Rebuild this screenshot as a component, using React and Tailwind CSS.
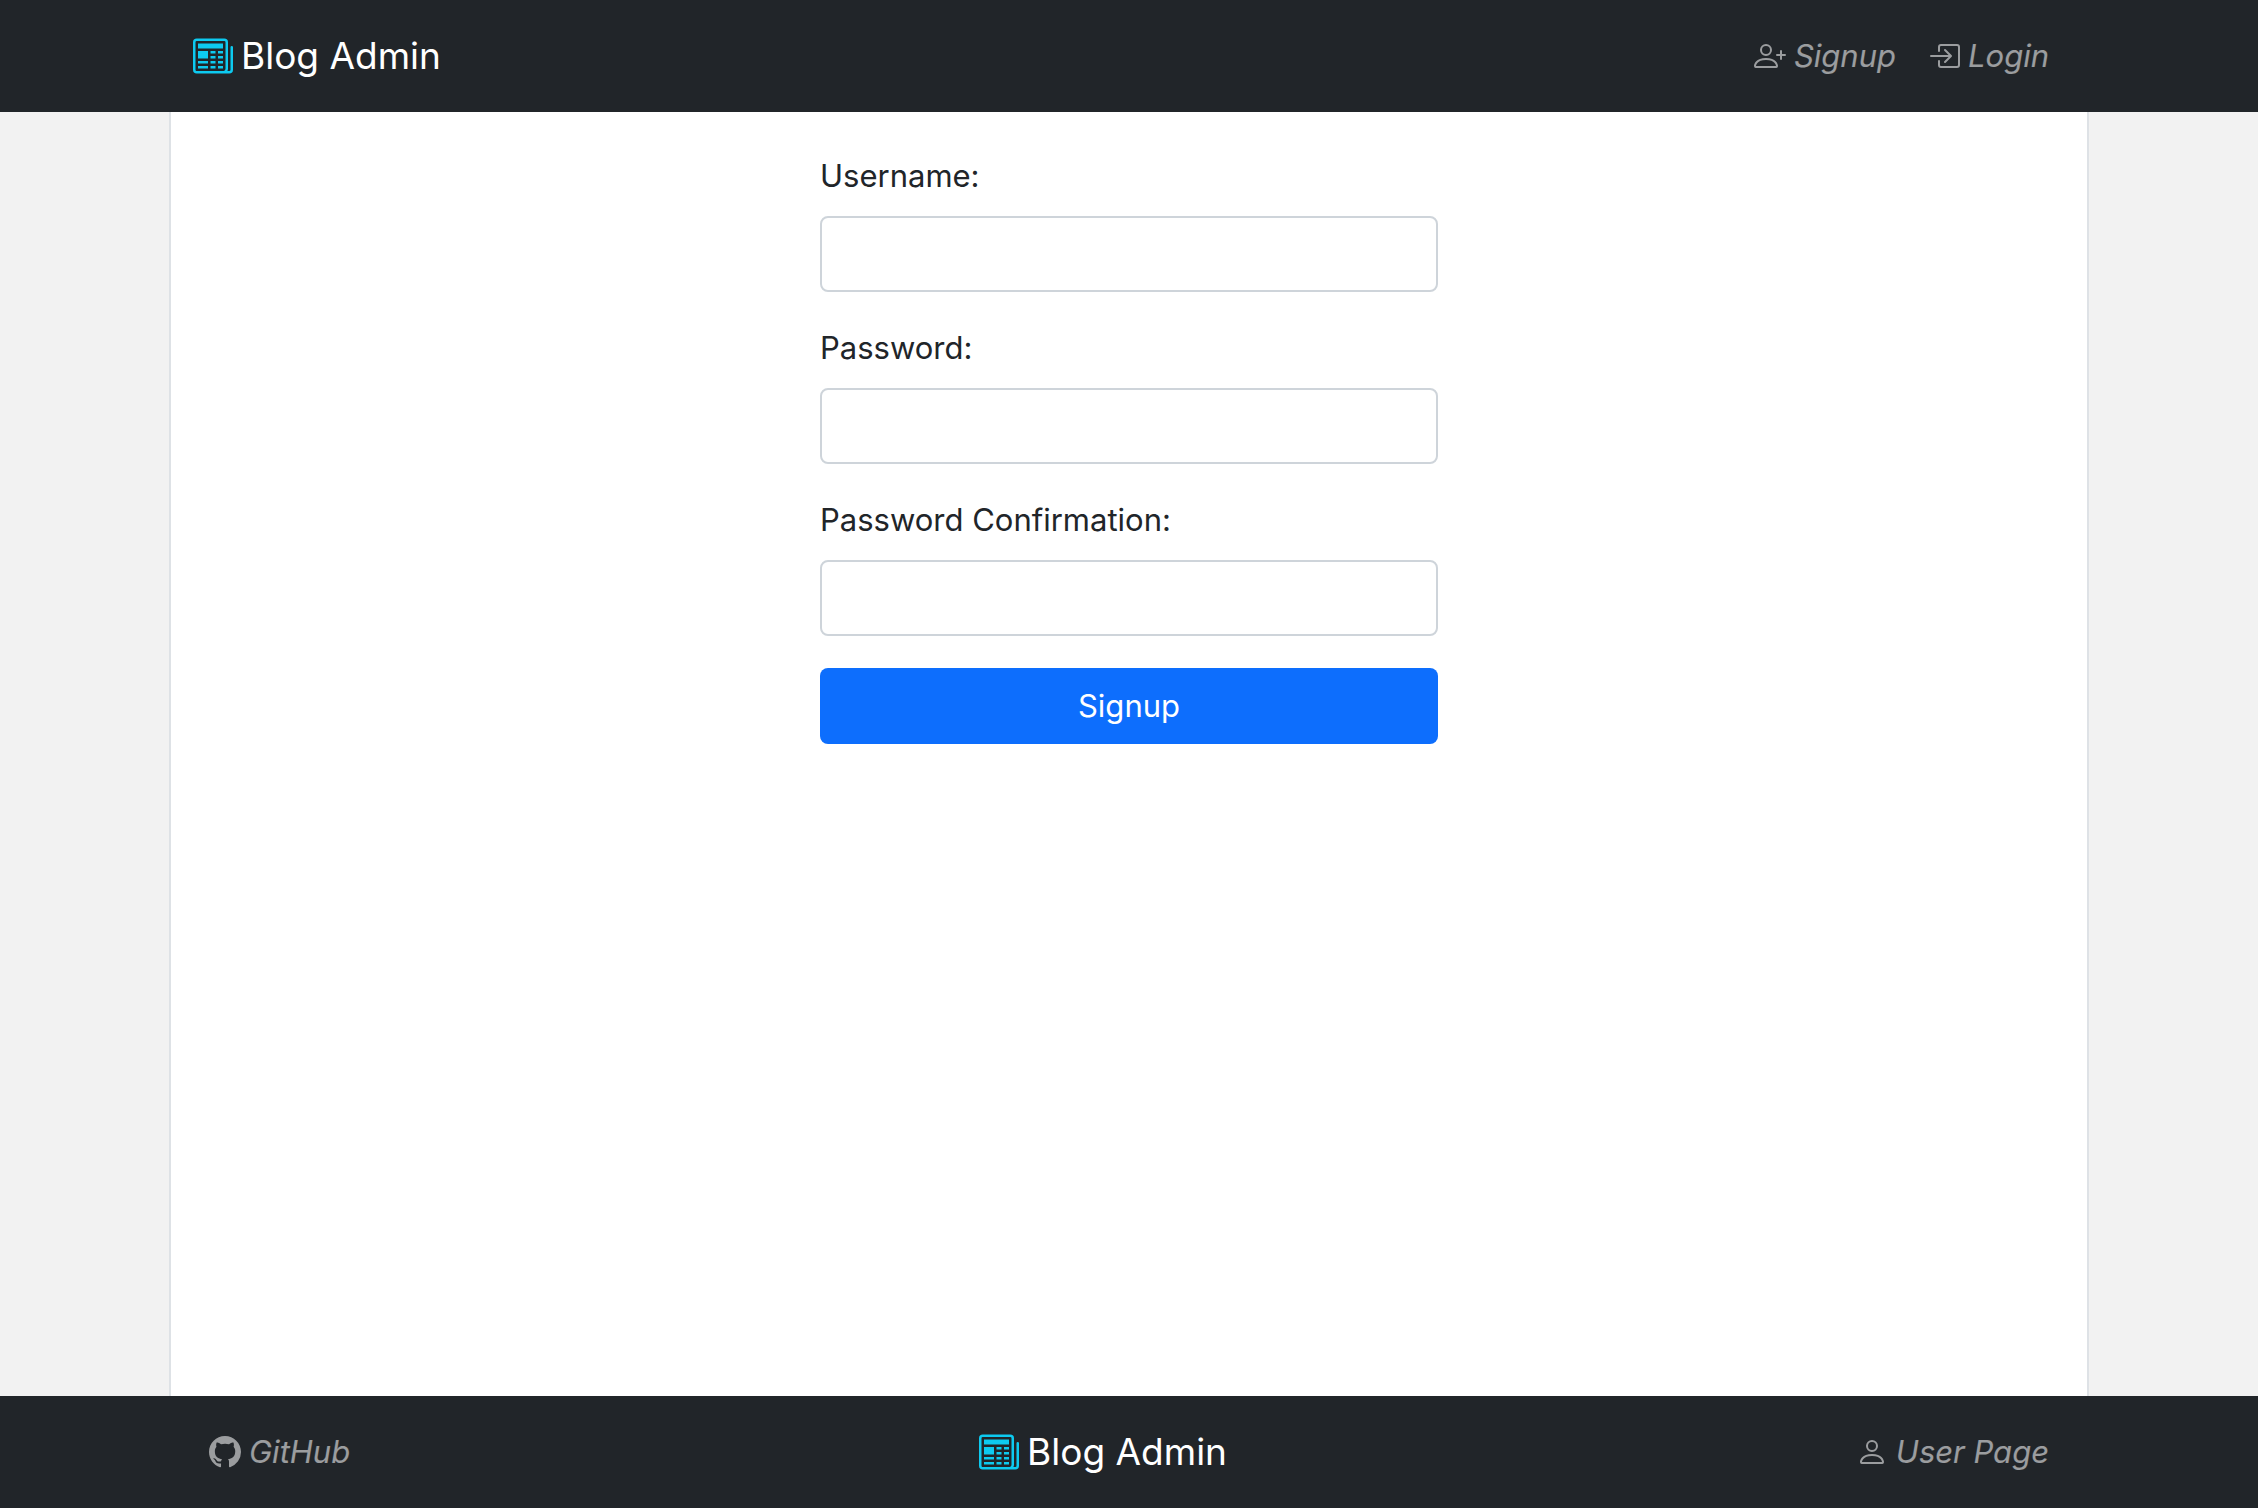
import { BsNewspaper, BsPersonPlus, BsBoxArrowInRight, BsGithub, BsPerson } from "react-icons/bs";

function Brand() {
  return (
    <a href="#" className="flex items-center gap-2 text-[37px] leading-[60px] text-white">
      <BsNewspaper className="size-10 text-[#0dcaf0]" aria-hidden="true" />
      Blog Admin
    </a>
  );
}

function NavLink({ icon: Icon, children }) {
  return (
    <a href="#" className="flex items-center gap-2 px-4 text-[31px] leading-[48px] text-white/55 italic">
      <Icon className="size-8" aria-hidden="true" />
      {children}
    </a>
  );
}

function Field({ id, label, type }) {
  return (
    <div className="flex flex-col gap-4">
      <label htmlFor={id} className="text-[31px] leading-[48px]">
        {label}
      </label>
      <input
        id={id}
        name={id}
        type={type}
        className="h-[76px] w-full rounded-lg border-2 border-[#ced4da] bg-white px-6 text-[31px]"
      />
    </div>
  );
}

export default function App() {
  return (
    <div className="flex min-h-screen flex-col bg-[#f2f2f2] font-['Inter',sans-serif] text-[#212529]">
      <header className="bg-[#212529]">
        <nav className="mx-auto flex h-28 max-w-[1920px] items-center justify-between px-6">
          <Brand />
          <div className="flex">
            <NavLink icon={BsPersonPlus}>Signup</NavLink>
            <NavLink icon={BsBoxArrowInRight}>Login</NavLink>
          </div>
        </nav>
      </header>
      <main className="mx-auto w-full max-w-[1920px] grow border-x-2 border-[#dee2e6] bg-white px-6 py-10">
        <form className="mx-auto flex max-w-[618px] flex-col gap-8">
          <Field id="username" label="Username:" type="text" />
          <Field id="password" label="Password:" type="password" />
          <Field id="passwordConfirmation" label="Password Confirmation:" type="password" />
          <button type="submit" className="h-[76px] w-full rounded-lg bg-[#0d6efd] text-[31px] text-white">
            Signup
          </button>
        </form>
      </main>
      <footer className="bg-[#212529]">
        <nav className="mx-auto flex h-28 max-w-[1920px] items-center justify-between px-6">
          <NavLink icon={BsGithub}>GitHub</NavLink>
          <Brand />
          <NavLink icon={BsPerson}>User Page</NavLink>
        </nav>
      </footer>
    </div>
  );
}
